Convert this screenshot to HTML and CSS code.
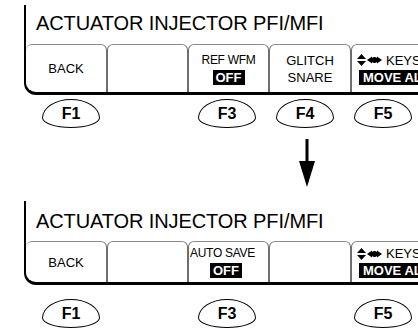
FILE: index.html
```html
<!DOCTYPE html>
<html lang="en">
<head>
    <meta charset="UTF-8">
    <title>Actuator Injector PFI/MFI - Soft Keys</title>
    <link rel="stylesheet" href="styles.css">
</head>
<body>
    <div class="screen first">
        <div class="title">ACTUATOR INJECTOR PFI/MFI</div>
        <div class="softkeys">
            <div class="key">BACK</div>
            <div class="key"></div>
            <div class="key small"><span>REF WFM</span><span class="tag">OFF</span></div>
            <div class="key"><span>GLITCH</span><span>SNARE</span></div>
            <div class="key keys">
                <span class="keys-label">
                    <svg width="28" height="12" viewBox="0 0 28 12">
                        <polygon points="4.5,0 9,5 0,5" />
                        <polygon points="0,7 9,7 4.5,12" />
                        <polygon points="10,6 15,2.5 15,9.5" />
                        <circle cx="17.5" cy="6" r="3" />
                        <polygon points="20,2.5 25,6 20,9.5" />
                    </svg>KEYS
                </span>
                <span class="tag wide">MOVE ALL</span>
            </div>
        </div>
    </div>

    <div class="fkeys first">
        <div class="fkey">F1</div>
        <div class="fkey blank">F2</div>
        <div class="fkey">F3</div>
        <div class="fkey">F4</div>
        <div class="fkey">F5</div>
    </div>

    <div class="arrow">
        <svg width="16" height="48" viewBox="0 0 16 48">
            <rect x="6.5" y="0" width="3" height="24" />
            <polygon points="0,22 16,22 8,48" />
        </svg>
    </div>

    <div class="screen second">
        <div class="title">ACTUATOR INJECTOR PFI/MFI</div>
        <div class="softkeys">
            <div class="key">BACK</div>
            <div class="key"></div>
            <div class="key small left"><span>AUTO SAVE</span><span class="tag">OFF</span></div>
            <div class="key"></div>
            <div class="key keys">
                <span class="keys-label">
                    <svg width="28" height="12" viewBox="0 0 28 12">
                        <polygon points="4.5,0 9,5 0,5" />
                        <polygon points="0,7 9,7 4.5,12" />
                        <polygon points="10,6 15,2.5 15,9.5" />
                        <circle cx="17.5" cy="6" r="3" />
                        <polygon points="20,2.5 25,6 20,9.5" />
                    </svg>KEYS
                </span>
                <span class="tag wide">MOVE ALL</span>
            </div>
        </div>
    </div>

    <div class="fkeys second">
        <div class="fkey">F1</div>
        <div class="fkey blank">F2</div>
        <div class="fkey">F3</div>
        <div class="fkey blank">F4</div>
        <div class="fkey">F5</div>
    </div>
</body>
</html>
```

FILE: styles.css
```css
body {
    margin: 0;
    width: 418px;
    height: 333px;
    overflow: hidden;
    background-color: #fff;
    color: #000;
    font-family: "Liberation Sans", Arial, sans-serif;
}
.screen {
    margin-left: 24px;
    width: 430px;
    border-left: 2px solid #000;
    border-bottom: 3px solid #000;
    border-bottom-left-radius: 12px;
}
.screen.first {
    margin-top: 5px;
}
.screen.second {
    margin-top: 14px;
}
.title {
    height: 39px;
    box-sizing: border-box;
    padding: 6px 0 0 10px;
    font-size: 20px;
    line-height: 24px;
    letter-spacing: -0.1px;
    white-space: nowrap;
}
.second .title {
    height: 40px;
    padding-top: 8px;
}
.softkeys {
    display: grid;
    grid-template-columns: 81px 81px 81px 82px 1fr;
    height: 48px;
}
.second .softkeys {
    height: 41px;
}
.key {
    display: flex;
    flex-direction: column;
    align-items: center;
    justify-content: center;
    gap: 2px;
    border-top: 1px solid #8a8a8a;
    border-left: 1px solid #6e6e6e;
    border-right: 1px solid #6e6e6e;
    border-radius: 6px 6px 0 0;
    font-size: 13px;
    line-height: 15px;
    white-space: nowrap;
    overflow: hidden;
}
.key:first-child {
    border-left: none;
}
.key.small {
    font-size: 12px;
    letter-spacing: -0.3px;
}
.key.left {
    align-items: flex-start;
    padding-left: 1px;
}
.key.left .tag {
    margin-left: 20px;
}
.tag {
    background-color: #000;
    color: #fff;
    font-weight: bold;
    font-size: 13px;
    line-height: 15px;
    padding: 0 3px;
    letter-spacing: 0;
}
.key.keys {
    align-items: flex-start;
    padding-left: 5px;
}
.keys-label {
    display: flex;
    align-items: center;
    gap: 1px;
}
.tag.wide {
    padding-left: 4px;
    margin-left: 2px;
}
.fkeys {
    display: flex;
    gap: 20px;
    padding-left: 42px;
}
.fkeys.first {
    margin-top: 4px;
}
.fkeys.second {
    margin-top: 14px;
}
.fkey {
    width: 58px;
    height: 29px;
    box-sizing: border-box;
    border: 1.5px solid #000;
    border-radius: 50% / 65% 65% 35% 35%;
    display: flex;
    align-items: center;
    justify-content: center;
    font-size: 16px;
    font-weight: bold;
}
.fkey.blank {
    visibility: hidden;
}
.arrow {
    padding-left: 299px;
    margin-top: 11px;
    height: 48px;
}
.arrow svg {
    display: block;
}
```
